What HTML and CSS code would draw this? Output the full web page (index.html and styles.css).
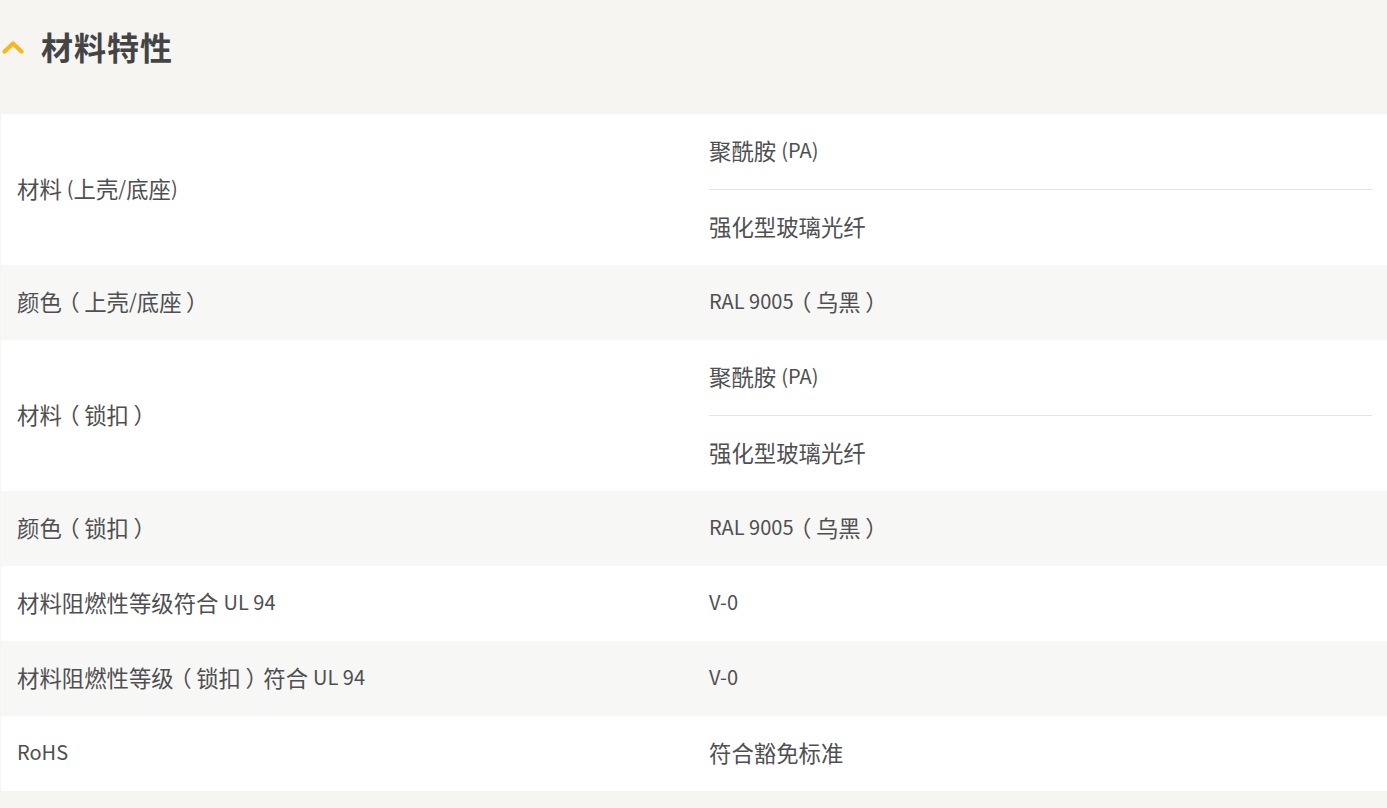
FILE: index.html
```html
<!DOCTYPE html>
<html lang="zh-CN">
<head>
<meta charset="utf-8">
<title>材料特性</title>
<link rel="stylesheet" href="styles.css">
</head>
<body>
<section class="spec">
  <header class="spec-head">
    <svg class="chev" width="22" height="14" viewBox="0 0 22 14" aria-hidden="true">
      <path d="M2.5 11.5 L11 3.5 L19.5 11.5" fill="none" stroke="#f6b81a" stroke-width="4.2" stroke-linecap="round" stroke-linejoin="round"/>
    </svg>
    <h2 class="spec-title">材料特性</h2>
  </header>
  <div class="spec-table">
    <div class="row white">
      <div class="label">材料 <span class="lat">(</span>上壳<span class="lat">/</span>底座<span class="lat">)</span></div>
      <div class="values">
        <div class="val">聚酰胺 <span class="lat">(PA)</span></div>
        <div class="val sep">强化型玻璃光纤</div>
      </div>
    </div>
    <div class="row grey">
      <div class="label">颜色<span class="po">（</span>上壳<span class="lat">/</span>底座<span class="pc">）</span></div>
      <div class="values"><div class="val"><span class="lat">RAL 9005</span><span class="po">（</span>乌黑<span class="pc">）</span></div></div>
    </div>
    <div class="row white">
      <div class="label">材料<span class="po">（</span>锁扣<span class="pc">）</span></div>
      <div class="values">
        <div class="val">聚酰胺 <span class="lat">(PA)</span></div>
        <div class="val sep">强化型玻璃光纤</div>
      </div>
    </div>
    <div class="row grey">
      <div class="label">颜色<span class="po">（</span>锁扣<span class="pc">）</span></div>
      <div class="values"><div class="val"><span class="lat">RAL 9005</span><span class="po">（</span>乌黑<span class="pc">）</span></div></div>
    </div>
    <div class="row white">
      <div class="label">材料阻燃性等级符合 <span class="lat">UL 94</span></div>
      <div class="values"><div class="val"><span class="lat">V-0</span></div></div>
    </div>
    <div class="row grey">
      <div class="label">材料阻燃性等级<span class="po">（</span>锁扣<span class="pc">）</span>符合 <span class="lat">UL 94</span></div>
      <div class="values"><div class="val"><span class="lat">V-0</span></div></div>
    </div>
    <div class="row white">
      <div class="label"><span class="lat">RoHS</span></div>
      <div class="values"><div class="val">符合豁免标准</div></div>
    </div>
  </div>
</section>
</body>
</html>
```

FILE: styles.css
```css
html, body {
  margin: 0;
  padding: 0;
  background: #f6f5f2;
}
body {
  font-family: "Noto Sans CJK SC", "Noto Sans", sans-serif;
  color: #4f4f52;
}
.spec-head {
  height: 114px;
  box-sizing: border-box;
  display: flex;
  align-items: flex-start;
  padding-top: 28px;
}
.chev {
  margin: 12px 0 0 2px;
  flex: none;
}
.spec-title {
  margin: 0 0 0 17px;
  font-size: 32px;
  letter-spacing: 1px;
  line-height: 36px;
  font-weight: 700;
  color: #444446;
}
.spec-table {
  margin-left: 1px;
}
.row {
  display: grid;
  grid-template-columns: 693px 1fr;
}
.row.white { background: #ffffff; }
.row.grey { background: #f7f7f5; }
.label {
  display: flex;
  align-items: center;
  padding-left: 16px;
  padding-bottom: 3px;
  font-size: 22.4px;
  line-height: 30px;
  white-space: pre;
}
.values {
  padding-left: 15px;
  padding-right: 15px;
}
.val {
  height: 75px;
  box-sizing: border-box;
  padding-bottom: 3px;
  display: flex;
  align-items: center;
  font-size: 22.4px;
  line-height: 30px;
  white-space: pre;
}
.lat {
  font-size: 20px;
}
.po {
  font-feature-settings: "halt";
  margin-left: 0.3em;
  margin-right: 0.2em;
}
.pc {
  font-feature-settings: "halt";
  margin-left: 0.2em;
  margin-right: 0.3em;
}
.val.sep {
  height: 76px;
  border-top: 1px solid #e3e3e3;
}
```
